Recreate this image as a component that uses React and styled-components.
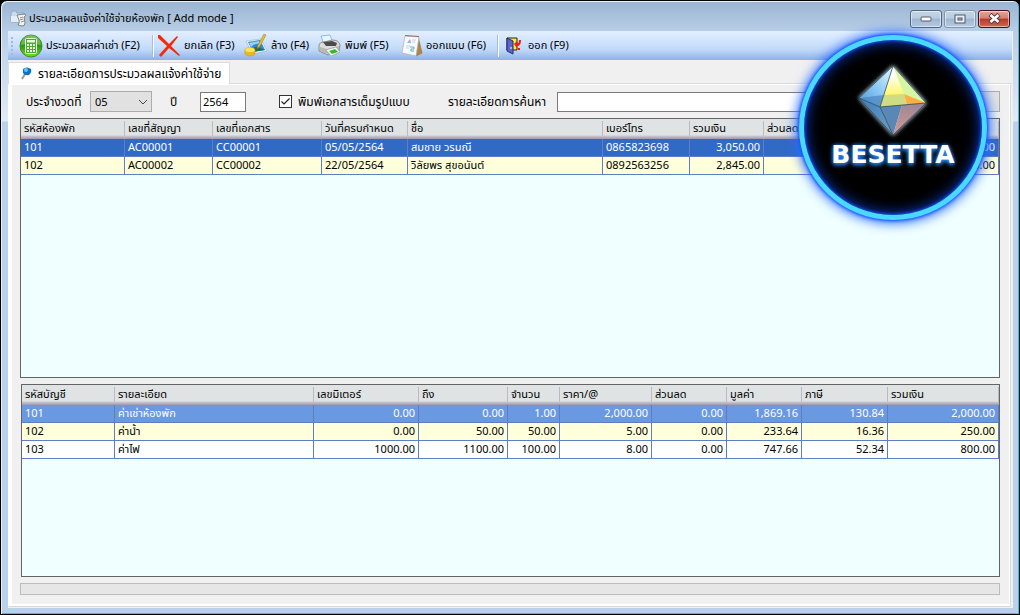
import React from 'react';
import styled, { createGlobalStyle } from 'styled-components';

const GlobalStyle = createGlobalStyle`
  * { box-sizing: border-box; }
  body {
    margin: 0;
    background: #000;
    font-family: 'Noto Sans', 'Noto Sans Thai', sans-serif;
    font-size: 11px;
    color: #000;
  }
  button, input, select { font: inherit; color: inherit; }
`;

const roomCols = [
  { title: 'รหัสห้องพัก', w: 104 },
  { title: 'เลขที่สัญญา', w: 88 },
  { title: 'เลขที่เอกสาร', w: 109 },
  { title: 'วันที่ครบกำหนด', w: 86 },
  { title: 'ชื่อ', w: 195 },
  { title: 'เบอร์โทร', w: 87 },
  { title: 'รวมเงิน', w: 74, num: true },
  { title: 'ส่วนลด', w: 150, num: true },
  { title: '', w: 85, num: true },
];

const roomRows = [
  ['101', 'AC00001', 'CC00001', '05/05/2564', 'สมชาย วรมณี', '0865823698', '3,050.00', '', '0.00'],
  ['102', 'AC00002', 'CC00002', '22/05/2564', 'วิลัยพร สุขอนันต์', '0892563256', '2,845.00', '', '0.00'],
];

const costCols = [
  { title: 'รหัสบัญชี', w: 93 },
  { title: 'รายละเอียด', w: 199 },
  { title: 'เลขมิเตอร์', w: 105, num: true },
  { title: 'ถึง', w: 89, num: true },
  { title: 'จำนวน', w: 52, num: true },
  { title: 'ราคา/@', w: 92, num: true },
  { title: 'ส่วนลด', w: 75, num: true },
  { title: 'มูลค่า', w: 75, num: true },
  { title: 'ภาษี', w: 86, num: true },
  { title: 'รวมเงิน', w: 111, num: true },
];

const costRows = [
  ['101', 'ค่าเช่าห้องพัก', '0.00', '0.00', '1.00', '2,000.00', '0.00', '1,869.16', '130.84', '2,000.00'],
  ['102', 'ค่าน้ำ', '0.00', '50.00', '50.00', '5.00', '0.00', '233.64', '16.36', '250.00'],
  ['103', 'ค่าไฟ', '1000.00', '1100.00', '100.00', '8.00', '0.00', '747.66', '52.34', '800.00'],
];

const TitleIcon = () => (
  <svg width="17" height="17" viewBox="0 0 17 17">
    <path d="M1 3 L2 1 H6 L7 3 H14 V12 H1Z" fill="#c9dcee" stroke="#8aa9c8" />
    <path d="M1 6H14V12H1Z" fill="#e3eef8" />
    <path d="M7 5 L15 4 Q17 6 14 7 L15 13 Q15 16 12 16 L8 15 Q10 13 9 10Z" fill="#f1f1ef" stroke="#6d6d6d" strokeWidth=".8" />
    <path d="M10 8l3-1M10 10l3-1M11 12l3-1" stroke="#777" strokeWidth=".8" />
  </svg>
);

const CalcIcon = () => (
  <svg width="24" height="24" viewBox="0 0 24 24">
    <defs>
      <linearGradient id="calc" x1="0" y1="0" x2="0" y2="1">
        <stop offset="0" stopColor="#5aa832" />
        <stop offset=".5" stopColor="#2c9a12" />
        <stop offset="1" stopColor="#6ee02e" />
      </linearGradient>
    </defs>
    <circle cx="12" cy="12" r="11" fill="url(#calc)" stroke="#3b8f23" />
    <path d="M2 11 A10 10 0 0 1 22 11 Q12 8 2 11Z" fill="#fff" opacity=".25" />
    <rect x="6.5" y="4.5" width="11" height="15" rx="1" fill="#4ea934" stroke="#e9f8e2" />
    <rect x="8" y="6" width="8" height="2.5" fill="#e9f8e2" />
    <path d="M8 10h2v2H8zM11 10h2v2h-2zM14 10h2v2h-2zM8 13h2v2H8zM11 13h2v2h-2zM14 13h2v2h-2zM8 16h2v2H8zM11 16h2v2h-2zM14 16h2v2h-2z" fill="#e9f8e2" />
  </svg>
);

const CancelIcon = () => (
  <svg width="24" height="24" viewBox="0 0 24 24">
    <path d="M1 1 L3 1 L12 10 L20 2 L21 3 L14 12 L23 21 L22 22 L12 14 L4 23 L2 21 L10 12 L1 4Z" fill="#f52a08" />
  </svg>
);

const ClearIcon = () => (
  <svg width="24" height="24" viewBox="0 0 24 24">
    <path d="M2 7 L17 5 L23 17 L8 20Z" fill="#e8f2f7" stroke="#9db6c2" strokeWidth=".6" />
    <path d="M4 8 L16 6 L21 16 L9 18Z" fill="#2d8bd0" />
    <path d="M8 15 Q12 11 16 14 L21 16 L9 18Z" fill="#1d6e53" />
    <path d="M5 9 L15 7 L16 10 Q10 9 7 13Z" fill="#92d4f3" />
    <path d="M20 0 L22 1 L16 12 L13 15 L14 11Z" fill="#e8be35" stroke="#9b7920" strokeWidth=".5" />
    <path d="M1 16v4q5 4 10 0v-4z" fill="#f0b818" stroke="#c68c0d" strokeWidth=".5" />
    <ellipse cx="6" cy="16" rx="5" ry="2.5" fill="#ffe553" stroke="#d9a315" strokeWidth=".5" />
  </svg>
);

const PrinterIcon = () => (
  <svg width="24" height="24" viewBox="0 0 24 24">
    <path d="M3 2 L12 1 L15 9 L6 11Z" fill="#e7f5ff" stroke="#8ebee2" />
    <path d="M1 12 Q1 8 6 8 L14 6 Q21 6 22 11 L21 17 L10 21 L1 17Z" fill="#dcdcd8" stroke="#70706c" strokeWidth=".7" />
    <path d="M5 8 L14 7 L19 9 L18 12 L8 12Z" fill="#4b4b4b" />
    <path d="M2 13 L9 15 L21 12 V16 L10 20 L2 17Z" fill="#b8b8b4" />
    <path d="M8 16 L18 13 L22 18 L13 22Z" fill="#f5fff5" stroke="#888" strokeWidth=".5" />
    <path d="M11 17 L17 15 L20 18 L14 20Z" fill="#3db630" />
  </svg>
);

const DesignIcon = () => (
  <svg width="22" height="24" viewBox="0 0 22 24">
    <path d="M17 2 L21 19 L15 22Z" fill="#b5853e" stroke="#80602e" strokeWidth=".5" />
    <path d="M4 2 L18 3 L15 22 L1 19Z" fill="#f8fbff" stroke="#a7b2c1" strokeWidth=".7" />
    <path d="M4 1 L18 2 V3 L4 2Z" fill="#a66a50" />
    <path d="M6 9 L9 5 L10 9Z" fill="#a3a4ea" />
    <path d="M11 6h4M11 8h3M5 12h4M5 14h3" stroke="#c3d0e6" />
    <path d="M9 13h4v2h-3v2h3" fill="none" stroke="#5ab4c4" />
  </svg>
);

const ExitIcon = () => (
  <svg width="16" height="18" viewBox="0 0 16 18">
    <path d="M1 1H11V13H1Z" fill="#ffee20" stroke="#222" />
    <path d="M1 1 L7 4 V17 L1 14Z" fill="#5c65cb" stroke="#222b75" />
    <path d="M5 10v2" stroke="#fff" />
    <path d="M8 7 L11 4 V6 Q13 7 13 3 H15 Q15 9 11 9 V11Z" fill="#f51919" />
    <path d="M12 11h2v2h-2z" fill="#f51919" />
  </svg>
);

const PinIcon = () => (
  <svg width="12" height="13" viewBox="0 0 12 13">
    <path d="M1 12 L4 7" stroke="#9a9a9a" strokeWidth="2" />
    <path d="M2 2 Q6 -1 10 2 Q11 6 8 8 Q4 9 2 6Z" fill="#0b71c9" />
    <circle cx="5" cy="3" r="2" fill="#66c3ff" />
  </svg>
);

const Crystal = () => (
  <svg width="70" height="74" viewBox="0 0 70 74">
    <defs>
      <linearGradient id="cl" x1="0" y1="1" x2="1" y2="0">
        <stop offset="0" stopColor="#4f96d8" />
        <stop offset=".5" stopColor="#8bcaf5" />
        <stop offset="1" stopColor="#e5f8ff" />
      </linearGradient>
      <linearGradient id="cy" x1="0" y1="0" x2="0" y2="1">
        <stop offset="0" stopColor="#fff" />
        <stop offset=".2" stopColor="#fff" />
        <stop offset=".7" stopColor="#fff76a" />
        <stop offset="1" stopColor="#c8e3a2" />
      </linearGradient>
      <linearGradient id="cb" x1="0" y1="0" x2="1" y2="1">
        <stop offset="0" stopColor="#3f7dbd" />
        <stop offset="1" stopColor="#6e9fc6" />
      </linearGradient>
      <linearGradient id="cr" x1="0" y1="0" x2="0" y2="1">
        <stop offset="0" stopColor="#9a8796" />
        <stop offset="1" stopColor="#d79a94" />
      </linearGradient>
    </defs>
    <path d="M35 2 L1 34 L22 43Z" fill="url(#cl)" />
    <path d="M1 34 L26 31 L22 43Z" fill="#4a86bf" opacity=".7" />
    <path d="M35 2 L68 39 L22 43Z" fill="url(#cy)" />
    <path d="M35 2 L68 39 L46 30Z" fill="#d6f6a4" />
    <path d="M46 30 L68 39 L49 41Z" fill="#ffae43" />
    <path d="M46 30 L49 41 L22 43 L26 31Z" fill="#cfdc83" />
    <path d="M1 34 L22 43 L35 71Z" fill="url(#cb)" />
    <path d="M22 43 L44 41 L35 71Z" fill="#5a88b4" />
    <path d="M44 41 L68 39 L35 71Z" fill="url(#cr)" />
    <path d="M35 2 L1 34 L35 71 L68 39Z M35 2 L22 43 L68 39 M1 34 L22 43 L35 71" fill="none" stroke="#2c4a5c" strokeWidth=".8" />
  </svg>
);

const DataGrid = ({ cols, rows, label, grow, soft }) => (
  <GridBox $grow={grow} $soft={soft}>
    <Table aria-label={label}>
      <colgroup>
        {cols.map((c, i) => <Col key={i} $w={c.w} />)}
      </colgroup>
      <thead>
        <tr>{cols.map((c, i) => <Th key={i} scope="col"><HeadText>{c.title}</HeadText></Th>)}</tr>
      </thead>
      <tbody>
        {rows.map((r, i) => (
          <Row key={i} $selected={i === 0} $soft={soft} $odd={i % 2 === 1}>
            {r.map((v, j) => <Td key={j} $num={cols[j].num}>{v}</Td>)}
          </Row>
        ))}
      </tbody>
    </Table>
  </GridBox>
);

export default function App() {
  return (
    <>
      <GlobalStyle />
      <Window>
        <TitleBar>
          <TitleIcon />
          <Title>ประมวลผลแจ้งค่าใช้จ่ายห้องพัก [ Add mode ]</Title>
          <WinButton aria-label="Minimize">
            <svg width="12" height="6"><rect x="1" y="1" width="10" height="4" rx="1" fill="#fff" stroke="#525a68" /></svg>
          </WinButton>
          <WinButton aria-label="Maximize" $dim>
            <svg width="12" height="10"><rect x="1" y="1" width="10" height="8" fill="#e8eef5" stroke="#525a68" /><rect x="4" y="4" width="4" height="2" fill="#a9bdd3" stroke="#525a68" /></svg>
          </WinButton>
          <WinButton aria-label="Close" $close>
            <svg width="13" height="11" viewBox="0 0 13 11"><path d="M2 1.5 L11 9.5 M11 1.5 L2 9.5" stroke="#5b3a44" strokeWidth="4.5" /><path d="M2.5 2 L10.5 9 M10.5 2 L2.5 9" stroke="#fff" strokeWidth="2.6" /></svg>
          </WinButton>
        </TitleBar>
        <Client>
          <ToolBar>
            <Grip />
            <Tool $w={131}><CalcIcon />ประมวลผลค่าเช่า (F2)</Tool>
            <Divider />
            <Tool $w={87}><CancelIcon />ยกเลิก (F3)</Tool>
            <Tool $w={74}><ClearIcon />ล้าง (F4)</Tool>
            <Tool $w={83}><PrinterIcon />พิมพ์ (F5)</Tool>
            <Tool $w={94}><DesignIcon />ออกแบบ (F6)</Tool>
            <Divider />
            <Tool $w={76} $wide><ExitIcon />ออก (F9)</Tool>
          </ToolBar>
          <TabStrip>
            <Tab><PinIcon />รายละเอียดการประมวลผลแจ้งค่าใช้จ่าย</Tab>
          </TabStrip>
          <Page>
            <Filters>
              <Label htmlFor="period" $w={64}>ประจำงวดที่</Label>
              <PeriodBox>
                <Period id="period" defaultValue="05">
                  <option>05</option>
                  <option>06</option>
                </Period>
                <Chevron width="10" height="6" viewBox="0 0 10 6"><path d="M1 1 L5 5 L9 1" fill="none" stroke="#444" /></Chevron>
              </PeriodBox>
              <Label htmlFor="year" $w={30}>ปี</Label>
              <Year id="year" defaultValue="2564" />
              <CheckLabel>
                <Check type="checkbox" defaultChecked />
                พิมพ์เอกสารเต็มรูปแบบ
              </CheckLabel>
              <Label htmlFor="search" $w={109}>รายละเอียดการค้นหา</Label>
              <Search id="search" />
              <FindButton aria-label="ค้นหา" />
            </Filters>
            <DataGrid label="ห้องพัก" cols={roomCols} rows={roomRows} grow={260} />
            <DataGrid label="รายละเอียดค่าใช้จ่าย" cols={costCols} rows={costRows} grow={193} soft />
            <Status role="progressbar" aria-label="ความคืบหน้า" />
          </Page>
        </Client>
        <Badge>
          <Crystal />
          <Brand>BESETTA</Brand>
        </Badge>
      </Window>
    </>
  );
}

const Window = styled.div`
  position: relative;
  display: flex;
  flex-direction: column;
  min-height: 100vh;
  padding: 0 6px 6px;
  border: 1px solid #000;
  border-radius: 7px 7px 0 0;
  background: linear-gradient(#99b4d1 0, #b8cee7 30px, #dfebf8 120px, #b9d1ea 121px);
  box-shadow: inset 1px 1px #e9f2fb, inset -1px -1px #2fc4e8;
`;

const TitleBar = styled.header`
  display: flex;
  align-items: center;
  height: 30px;
  gap: 2px;
  padding: 5px 3px 0;
`;

const Title = styled.h1`
  flex: 1;
  margin: 0;
  font-size: 11px;
  font-weight: 400;
`;

const WinButton = styled.button`
  display: flex;
  align-items: center;
  justify-content: center;
  width: 32px;
  height: 18px;
  padding: 0;
  border: 1px solid ${p => (p.$close ? '#43101c' : p.$dim ? '#8296b0' : '#56657d')};
  border-radius: 3px;
  box-shadow: inset 0 0 0 1px rgba(255, 255, 255, 0.5);
  background: ${p => (p.$close
    ? 'linear-gradient(#e5a596 0, #d58170 45%, #b8372a 50%, #cf6a50 100%)'
    : 'linear-gradient(#c5d5e7 0, #b8cbe0 45%, #9fb6d0 50%, #b5cbe3 100%)')};
`;

const Client = styled.main`
  display: flex;
  flex: 1;
  flex-direction: column;
  margin: 0 0 0 1px;
  border-right: 1px solid #f0f0f0;
  background: #f0f0f0;
`;

const ToolBar = styled.div`
  display: flex;
  align-items: center;
  height: 29px;
  padding-left: 3px;
  background: linear-gradient(#e3efff 0, #c9dffb 50%, #c0d8f8 65%, #8db2e8 100%);
`;

const Grip = styled.span`
  width: 2px;
  height: 18px;
  margin-right: 6px;
  background: repeating-linear-gradient(#a8b9d3 0 2px, transparent 2px 4px);
`;

const Tool = styled.button`
  display: flex;
  align-items: center;
  gap: ${p => (p.$wide ? 6 : 3)}px;
  width: ${p => p.$w}px;
  padding: 0 0 0 ${p => (p.$wide ? 4 : 0)}px;
  border: 0;
  background: none;
  white-space: nowrap;

  svg { flex: none; }
`;

const Divider = styled.span`
  width: 2px;
  height: 22px;
  margin: 0 3px 0 2px;
  border-left: 1px solid #a9bcda;
  border-right: 1px solid #fff;
`;

const TabStrip = styled.div`
  display: flex;
  height: 24px;
  padding-top: 2px;
  border-bottom: 1px solid #dcdcdc;
`;

const Tab = styled.button`
  display: flex;
  align-items: center;
  gap: 5px;
  width: 222px;
  height: 22px;
  padding: 0 0 0 12px;
  border: 1px solid #dcdcdc;
  border-bottom: 0;
  background: #fff;
  font-size: 12px;
  white-space: nowrap;

  svg { flex: none; }
`;

const Page = styled.section`
  display: flex;
  flex: 1;
  flex-direction: column;
  gap: 6px;
  padding: 6px 9px 9px 8px;
  margin: 0 2px 2px 0;
  border: solid #fff;
  border-width: 1px 1px 2px 4px;
  box-shadow: 1px 1px #d9d9d9;
`;

const Filters = styled.form`
  display: flex;
  align-items: center;
  height: 21px;
  padding-left: 6px;
  font-size: 12px;
`;

const Label = styled.label`
  flex: none;
  width: ${p => p.$w}px;
  white-space: nowrap;
`;

const PeriodBox = styled.span`
  position: relative;
  width: 62px;
  height: 21px;
  margin-right: 18px;
`;

const Period = styled.select`
  appearance: none;
  width: 100%;
  height: 100%;
  padding: 0 4px;
  border: 1px solid #acacac;
  border-radius: 0;
  background: #e1e1e1;
  font-size: 11px;
`;

const Chevron = styled.svg`
  position: absolute;
  right: 4px;
  top: 8px;
  pointer-events: none;
`;

const Year = styled.input`
  width: 46px;
  height: 20px;
  padding: 0 2px;
  border: 1px solid #7a7a7a;
  background: #fff;
  font-size: 11px;
`;

const CheckLabel = styled.label`
  display: flex;
  align-items: center;
  gap: 6px;
  width: 169px;
  margin-left: 33px;
  white-space: nowrap;
`;

const Check = styled.input`
  appearance: none;
  flex: none;
  width: 13px;
  height: 13px;
  margin: 0;
  border: 1px solid #333;
  background: #fff;

  &:checked {
    background: #fff url("data:image/svg+xml,%3Csvg xmlns='http://www.w3.org/2000/svg' viewBox='0 0 11 11'%3E%3Cpath d='M1.5 5.5 L4 8 L9.5 2.5' fill='none' stroke='%23222' stroke-width='1.2'/%3E%3C/svg%3E");
  }
`;

const Search = styled.input`
  flex: 1;
  min-width: 0;
  height: 20px;
  border: 1px solid #7a7a7a;
  background: #fff;
`;

const FindButton = styled.button`
  width: 75px;
  height: 21px;
  margin-left: 6px;
  border: 1px solid #adadad;
  background: #e1e1e1;
`;

const GridBox = styled.div`
  flex: ${p => p.$grow} 1 0;
  margin-left: ${p => (p.$soft ? 1 : 0)}px;
  border: 1px solid #646464;
  background: #f0ffff;
  overflow: hidden;
`;

const Table = styled.table`
  table-layout: fixed;
  width: 100%;
  border-collapse: separate;
  border-spacing: 0;
  line-height: 15px;
`;

const Col = styled.col`
  width: ${p => p.$w}px;
`;

const Th = styled.th`
  height: 20px;
  padding: 2px 0 3px;
  background: linear-gradient(#dfe3e3 0 16px, #c9c9d3 17px, #9c98ae 20px);
  font-weight: 400;
  text-align: left;
  white-space: nowrap;
`;

const HeadText = styled.div`
  height: 15px;
  padding-left: 3px;
  border-right: 1px solid #b9b9c9;
  box-shadow: 1px 0 #fff;
  line-height: 13px;
`;

const Td = styled.td`
  height: 18px;
  padding: 0 3px 2px;
  border-right: 1px solid #5f7dc2;
  border-bottom: 1px solid #5f7dc2;
  text-align: ${p => (p.$num ? 'right' : 'left')};
  white-space: nowrap;
`;

const Row = styled.tr`
  color: ${p => (p.$selected ? '#fff' : '#000')};
  background: ${p => {
    if (p.$selected) return p.$soft ? '#6a99e4' : '#316ac5';
    return p.$odd ? '#ffffdc' : '#fff';
  }};
`;

const Status = styled.div`
  height: 12px;
  border: 1px solid #bcbcbc;
  background: #e6e6e6;
`;

const Badge = styled.aside`
  position: absolute;
  top: 34px;
  right: 32px;
  display: flex;
  flex-direction: column;
  align-items: center;
  width: 188px;
  height: 185px;
  padding-top: 24px;
  border: 5px solid #4bd8ff;
  border-radius: 50%;
  background: #000;
  box-shadow: 0 0 3px 1px #1550ff, 0 0 12px 3px #2a6cff, inset 0 0 3px 1px #1550ff, inset 0 0 14px 2px #0c37b4;

  svg { filter: drop-shadow(0 0 2px #d4f3ff); }
`;

const Brand = styled.strong`
  margin-top: 4px;
  color: #fff;
  font-family: 'DejaVu Sans', sans-serif;
  font-size: 25px;
  font-weight: 700;
  line-height: 26px;
  text-shadow: 0 2px 4px #2d8cff, 0 0 4px #2d8cff;
`;
